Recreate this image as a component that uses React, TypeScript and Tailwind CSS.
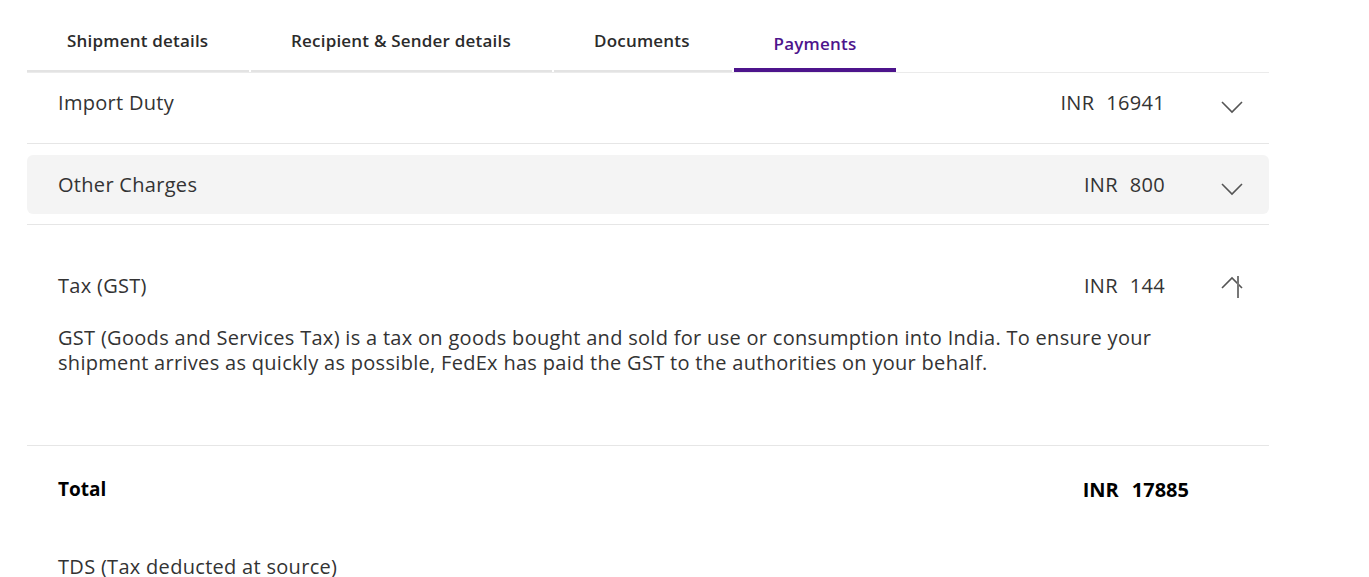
import React from 'react';

const tabs = [
  { label: 'Shipment details', w: 'w-[222px]' },
  { label: 'Recipient & Sender details', w: 'w-[301px]' },
  { label: 'Documents', w: 'w-[178px]' },
];

function Chevron({ up }: { up?: boolean }) {
  return (
    <svg width="22" height="14" viewBox="0 0 22 14" fill="none" className="text-[#555]">
      {up ? (
        <path d="M1 12 L11 2 L21 12" stroke="currentColor" strokeWidth="1.6" />
      ) : (
        <path d="M1 2 L11 12 L21 2" stroke="currentColor" strokeWidth="1.6" />
      )}
    </svg>
  );
}

function Amount({ value }: { value: string }) {
  return (
    <span className="w-[170px] text-right">
      INR<span className="ml-[12px]">{value}</span>
    </span>
  );
}

export default function App() {
  return (
    <div className="min-h-screen bg-white font-['Open_Sans',sans-serif] text-[20px] tracking-[0.3px] text-[#333]">
      <div className="ml-[27px] w-[1242px]">
        {/* tabs */}
        <div className="flex h-[73px] items-end border-b border-[#ebebeb]">
          {tabs.map((t) => (
            <div
              key={t.label}
              className={`${t.w} mr-[2px] border-b-2 border-[#e3e3e3] pl-[40px] pb-[18px] text-[17px] font-semibold leading-[22px] tracking-[0.2px] text-[#2b2b2b]`}
            >
              {t.label}
            </div>
          ))}
          <div className="w-[162px] border-b-4 border-[#4d148c] pb-[13px] text-center text-[17px] font-semibold leading-[22px] tracking-[0.2px] text-[#4d148c]">
            Payments
          </div>
        </div>

        <div className="border-b border-[#e6e6e6] pb-[10px]">
          <div className="flex h-[60px] items-center pl-[31px]">
            <span className="flex-1">Import Duty</span>
            <Amount value="16941" />
            <span className="ml-[56px] mr-[26px] mt-[8px] flex">
              <Chevron />
            </span>
          </div>
        </div>

        <div className="border-b border-[#e6e6e6] pt-[11px] pb-[10px]">
          <div className="flex h-[59px] items-center rounded-md bg-[#f4f4f4] pl-[31px]">
            <span className="flex-1">Other Charges</span>
            <Amount value="800" />
            <span className="ml-[56px] mr-[26px] mt-[8px] flex">
              <Chevron />
            </span>
          </div>
        </div>

        <div className="border-b border-[#e6e6e6] pb-[70px]">
          <div className="mt-[41px] flex h-[40px] items-center pl-[31px]">
            <span className="flex-1">Tax (GST)</span>
            <Amount value="144" />
            <span className="relative ml-[56px] mr-[26px] mb-[6px] flex">
              <Chevron up />
              <span className="absolute left-[16px] top-[0px] h-[22px] w-[2px] bg-[#777]" />
            </span>
          </div>
          <p className="mt-[19px] pl-[31px] pr-[40px] leading-[25px] text-[#333]">
            GST (Goods and Services Tax) is a tax on goods bought and sold for use or consumption into India. To ensure your
            <br />
            shipment arrives as quickly as possible, FedEx has paid the GST to the authorities on your behalf.
          </p>
        </div>

        <div className="flex h-[87px] items-center pl-[31px] text-[19px] font-bold tracking-normal text-black">
          <span className="flex-1">Total</span>
          <span className="mr-[80px] text-[20px]">
            INR<span className="ml-[13px]">17885</span>
          </span>
        </div>

        <div className="mt-[20px] pl-[31px] leading-[28px]">TDS (Tax deducted at source)</div>
      </div>
    </div>
  );
}
